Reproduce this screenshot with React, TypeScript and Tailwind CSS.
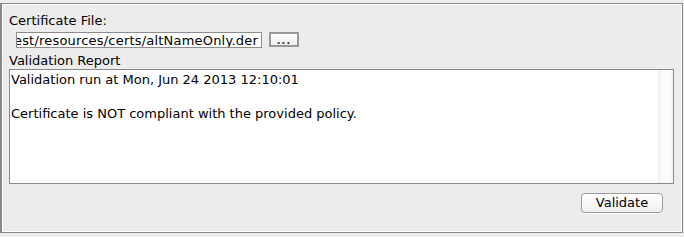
export default function App() {
  return (
    <div className="w-[684px] h-[237px] bg-[#ececec] pt-[3px] text-[13px] text-black font-['DejaVu_Sans','Liberation_Sans',sans-serif]">
      <div className="w-[683px] h-[230px] border border-l-2 border-[#8a8a8a] shadow-[inset_1px_1px_0_#ffffff,inset_-1px_-1px_0_#ffffff] pl-[7px] pr-[8px] pt-[8px] flex flex-col">
        <div className="leading-[17px] h-[17px] mb-[3px]">Certificate File:</div>

        <div className="flex items-start gap-[7px] pl-[7px] h-[17px]">
          <div className="w-[246px] h-[16px] bg-white border border-[#8d8d8d] flex justify-end overflow-hidden pr-[3px]">
            <span className="whitespace-nowrap leading-[15px] tracking-[0.2px]">src/test/resources/certs/altNameOnly.der</span>
          </div>
          <button className="w-[30px] h-[15px] border-2 border-[#9a9a9a] bg-gradient-to-b from-white to-[#ececec] flex items-center justify-center">
            <span className="text-[10px] leading-[10px] font-bold text-[#444] tracking-[1px] mt-[2px]">...</span>
          </button>
        </div>

        <div className="leading-[17px] h-[17px] mt-[3px]">Validation Report</div>

        <div className="h-[115px] bg-white border border-[#8a8a8a] flex">
          <div className="flex-1 pl-[1px] leading-[17px] pt-[1px]">
            <div>Validation run at Mon, Jun 24 2013 12:10:01</div>
            <div className="h-[17px]"></div>
            <div>Certificate is NOT compliant with the provided policy.</div>
          </div>
          <div className="w-[15px] border-l border-[#ececec] bg-gradient-to-r from-[#f4f4f4] via-white to-[#f5f5f5]"></div>
        </div>

        <div className="flex justify-end pr-[11px] mt-[9px]">
          <button className="w-[82px] h-[20px] rounded-[4px] border border-[#9c9c9c] bg-gradient-to-b from-white to-[#efefef] leading-[18px] text-[13px] shadow-[0_1px_0_#f8f8f8]">
            Validate
          </button>
        </div>
      </div>
    </div>
  );
}
